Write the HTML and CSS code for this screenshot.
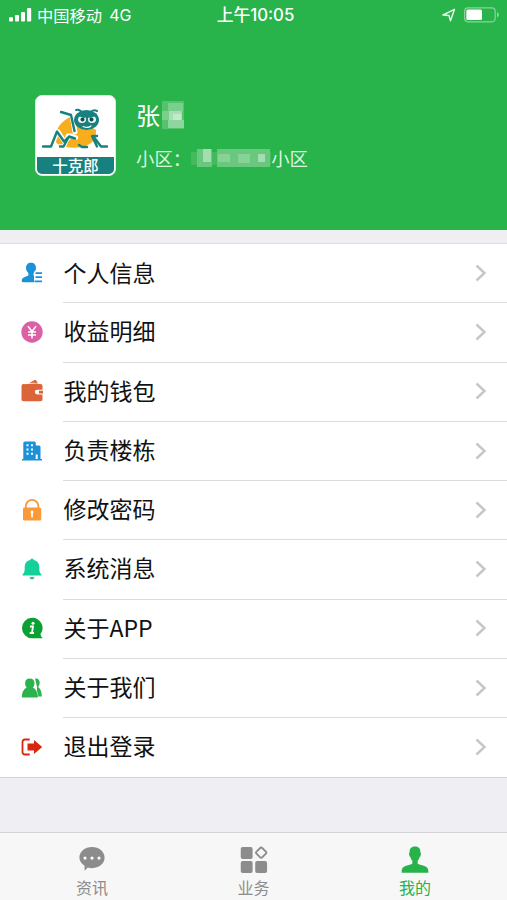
FILE: index.html
```html
<!DOCTYPE html>
<html lang="zh-CN">
<head>
<meta charset="utf-8">
<title>我的</title>
<link rel="stylesheet" href="styles.css">
</head>
<body>
<div class="app">
  <header class="header">
    <div class="status">
      <div class="carrier">
        <svg class="signal" width="24" height="14" viewBox="0 0 24 14" fill="#fff"><rect x="0" y="9.2" width="4" height="4.3" rx="1"/><rect x="6" y="7" width="4" height="6.5" rx="1"/><rect x="12" y="4" width="4" height="9.5" rx="1"/><rect x="18" y="0" width="4.2" height="13.5" rx="1"/></svg>
        <span>中国移动</span><span class="network">4G</span>
      </div>
      <div class="time">上午10:05</div>
      <div class="power">
        <svg width="14" height="14" viewBox="0 0 14 14" fill="none" stroke="#e4f7e8" stroke-width="1.5" stroke-linejoin="round"><path d="M1 7 12.5 1.3 8.5 12.7 7 7.6Z"/></svg>
        <svg width="36" height="16" viewBox="0 0 36 16"><rect x=".6" y=".8" width="30.6" height="14" rx="3.5" fill="none" stroke="#8bd59d" stroke-width="1.2"/><rect x="2.3" y="2.5" width="15.7" height="10.6" rx="1.5" fill="#fff"/><path d="M33 5v5.5q2-1 2-2.7T33 5Z" fill="#8bd59d"/></svg>
      </div>
    </div>
    <div class="profile">
      <div class="logo">
        <svg class="cricket" width="79" height="61" viewBox="0 0 79 61" fill="none" stroke-linecap="round" stroke-linejoin="round">
          <path d="M38 20C28 22 20 31 19 41q0 6 4 8c9 4 24 4 32-2 4-3 5-7 5-13Z" fill="#f7ad1c"/>
          <path d="M25 16l11 3 3 17" stroke="#fff" stroke-width="5"/>
          <path d="M25 16l10 3 3.500 16" stroke="#17817f" stroke-width="2.400"/>
          <path d="M15 50.500l7-15 7 11 5-7 6 2M24 50.500h4l4-11" stroke="#fff" stroke-width="4.500"/>
          <path d="M7 50.500h8l6-15 7 10 5-5 6 2M24 50.500h3.500l5-9M43 49l3 2h5M56 40l5 10.500M57 40l8 10.500h6M61 40h-3" stroke="#17817f" stroke-width="2.400"/>
          <path d="M46 17q-2-4-6-3M54 17q3-4 7-2" stroke="#17817f" stroke-width="2"/>
          <ellipse cx="50.500" cy="24" rx="12.500" ry="10" fill="#17817f"/>
          <ellipse cx="46" cy="23.500" rx="4" ry="3.500" fill="#e8f6ee"/><ellipse cx="56" cy="23.500" rx="4" ry="3.500" fill="#e8f6ee"/>
          <circle cx="46.500" cy="23.500" r="2" fill="#124f50"/><circle cx="55.500" cy="23.500" r="2" fill="#124f50"/>
          <path d="M42 18.500l6 2.500M54 21l6-2.500" stroke="#17817f" stroke-width="2"/>
          <path d="M47 30.500q5 2 8-.5" stroke="#fff" stroke-width="1.200"/>
        </svg>
        <div class="brand">十克郎</div>
      </div>
      <div class="details">
        <div class="name">张
          <svg class="name-mask" width="22" height="28" viewBox="0 0 22 28"><path fill="#56c26e" d="M0 0h22v28H0z"/><path fill="#7bcf8d" d="M6 2h15v8H6zM0 10h7v9H0z"/><path fill="#a6dfb2" d="M7 10h13v9H7z"/><path fill="#c2e9ca" d="M11 13h8v6h-8z"/><path fill="#8dd69d" d="M6 19h16v8H6z"/></svg>
        </div>
        <div class="community"><span>小区：</span><svg class="place-mask" width="80" height="20" viewBox="0 0 80 20"><path fill="#43ba5e" d="M0 4h80v13H0z"/><path fill="#69c87e" d="M6 1h15v18H6zM26 1h53v18H26z"/><path fill="#a4deb0" d="M12 1h8v13h-8zM67 6h7v8h-7z"/><path fill="#86d297" d="M27 6h12v8H27zM47 6h12v9H47z"/></svg><span>小区</span></div>
      </div>
    </div>
  </header>

  <main class="menu">
    <a class="row"><svg class="icon" viewBox="0 0 24 24" fill="#1b91d8"><path d="M11 1.700c3.200 0 5 2.100 5 5 0 2.500-1 4-2.400 5.400v2.500L16 16v5.300H3.300q-1.600 0-1.600-1.500c0-3 3.500-4 6.700-5.200v-2.500C7 10.700 6 9.200 6 6.700c0-2.900 1.800-5 5-5Z"/><path d="M14 10.500h9v12h-9z" fill="#fff"/><path d="M15.500 11.300H22V13h-6.500zM15.500 15.300H22V17h-6.500zM14.500 19.500H22v1.700h-7.500z"/></svg><span class="label">个人信息</span><svg class="chevron" viewBox="0 0 12 18"><path d="m1.500 1.500 8 7.500-8 7.500"/></svg></a>
    <a class="row"><svg class="icon" viewBox="0 0 24 24"><circle cx="12" cy="12" r="10.700" fill="#dc61a4"/><path d="m8 6.200 4 5.300 4-5.300M8 12h8M8 15h8M12 11.500v7" fill="none" stroke="#fff" stroke-width="1.500"/></svg><span class="label">收益明细</span><svg class="chevron" viewBox="0 0 12 18"><path d="m1.500 1.500 8 7.500-8 7.500"/></svg></a>
    <a class="row"><svg class="icon" viewBox="0 0 24 24" fill="#dc6439"><path d="M8.500 4.500 14.500 1q1-.5 1.700.5l1.800 3z"/><rect x="1.500" y="5" width="21" height="17.300" rx="2"/><path d="M23 10.800h-5.800a2.300 2.300 0 0 0 0 4.600H23Z" fill="#fff"/><path d="M23 11.800h-4.500q1.300 1.300 0 2.600H23Z"/><path d="M4 4.800 15 4" stroke="#fff" stroke-width=".5"/></svg><span class="label">我的钱包</span><svg class="chevron" viewBox="0 0 12 18"><path d="m1.500 1.500 8 7.500-8 7.500"/></svg></a>
    <a class="row"><svg class="icon" viewBox="0 0 24 24" fill="#1b91d8"><path d="M3.300 20V4q0-1.500 1.500-1.500h9.500q1.500 0 1.500 1.500v2.500H19q1.500 0 1.500 1.500v12H22v1.500H2V20z"/><path d="M6.500 5.200h2v2h-2zM11 5.200h2v2h-2zM6.500 9.500h2v2h-2zM11 9.500h2v2h-2zM6.500 13.700h2v2h-2zM11 13.700h2v2h-2zM15.700 15.500h2V20h-2z" fill="#fff"/></svg><span class="label">负责楼栋</span><svg class="chevron" viewBox="0 0 12 18"><path d="m1.500 1.500 8 7.500-8 7.500"/></svg></a>
    <a class="row"><svg class="icon" viewBox="0 0 24 24"><path d="M5.800 11V8.200a6.300 6.300 0 0 1 12.600 0V11" fill="none" stroke="#fb9938" stroke-width="1.800"/><rect x="3" y="9.500" width="18.200" height="13" rx="1.500" fill="#fb9938"/><path d="M12 13.700v5" stroke="#fff" stroke-width="1.700" stroke-linecap="round"/><circle cx="12" cy="14" r="1.500" fill="#fff"/></svg><span class="label">修改密码</span><svg class="chevron" viewBox="0 0 12 18"><path d="m1.500 1.500 8 7.500-8 7.500"/></svg></a>
    <a class="row"><svg class="icon" viewBox="0 0 24 24" fill="#14d09b"><path d="M12 1.500q1.500 0 1.800 1.600c3.800.8 5.500 3.600 5.500 7.400 0 4.200.4 5.500 2.200 7v1h-19v-1c1.800-1.500 2.200-2.800 2.200-7 0-3.800 1.700-6.600 5.500-7.400Q10.500 1.500 12 1.500ZM9.500 20h5q-.6 2.500-2.500 2.500T9.500 20Z"/></svg><span class="label">系统消息</span><svg class="chevron" viewBox="0 0 12 18"><path d="m1.500 1.500 8 7.500-8 7.500"/></svg></a>
    <a class="row"><svg class="icon" viewBox="0 0 24 24"><path d="M12 1.700a10.300 10.300 0 0 1 8.400 16.500q.5 2.700 2.600 4l-10.500.1A10.300 10.300 0 1 1 12 1.700Z" fill="#0ba033"/><circle cx="13" cy="7.300" r="1.500" fill="#fff"/><path d="M10 10.500h3l-1 6.500h2M9.700 17h2" fill="none" stroke="#fff" stroke-width="1.800"/></svg><span class="label">关于APP</span><svg class="chevron" viewBox="0 0 12 18"><path d="m1.500 1.500 8 7.500-8 7.500"/></svg></a>
    <a class="row"><svg class="icon" viewBox="0 0 24 24" fill="#2cb34d"><path d="M15 2.500c3.300-.5 4.700 1.700 4.700 4.200 0 2-.8 3.200-1.700 4.400 2.600 1.500 3.700 5 3.800 9.400H17V11Z"/><path d="M9.800 2.500c3.100 0 4.700 2 4.700 4.700 0 2-.7 3.300-1.600 4.300 3.300 1.500 4.900 5 5 9.900H1.800c0-5 1.700-8.400 4.900-9.900-.9-1-1.600-2.300-1.600-4.300 0-2.700 1.600-4.700 4.700-4.700Z" stroke="#fff" stroke-width=".9" paint-order="stroke"/></svg><span class="label">关于我们</span><svg class="chevron" viewBox="0 0 12 18"><path d="m1.500 1.500 8 7.500-8 7.500"/></svg></a>
    <a class="row"><svg class="icon" viewBox="0 0 24 24"><path d="M9.700 4.500H5q-2.500 0-2.500 2.500v10q0 2.500 2.500 2.500h4.700" fill="none" stroke="#da270f" stroke-width="1.800"/><path d="M7.500 8.500H14V5l8.200 7-8.200 7v-3.500H7.500z" fill="#da270f"/></svg><span class="label">退出登录</span><svg class="chevron" viewBox="0 0 12 18"><path d="m1.500 1.500 8 7.500-8 7.500"/></svg></a>
  </main>

  <nav class="tabs">
    <a class="tab"><svg viewBox="0 0 30 30" fill="#8c8c8c"><path d="M15 2.200c7.700 0 13.500 5 13.500 11.300S22.700 24.800 15 24.800q-2.300 0-4.500-.6L7 27.500v-5.200C3.500 20 1.500 17 1.500 13.500 1.500 7.200 7.300 2.200 15 2.200Z"/><g fill="#fff"><circle cx="7.500" cy="14" r="1.700"/><circle cx="15" cy="14" r="1.700"/><circle cx="22.500" cy="14" r="1.700"/></g></svg><span>资讯</span></a>
    <a class="tab"><svg viewBox="0 0 30 30" fill="#8c8c8c"><rect x=".8" y="2.200" width="12.700" height="12.700" rx="2"/><rect x=".8" y="17.200" width="12.700" height="12.700" rx="2"/><rect x="16.300" y="17.200" width="12.700" height="12.700" rx="2"/><rect x="18.400" y="3.900" width="8.600" height="8.600" rx="1.500" fill="none" stroke="#8c8c8c" stroke-width="2" transform="rotate(45 22.700 8.200)"/></svg><span>业务</span></a>
    <a class="tab active"><svg viewBox="0 0 30 30" fill="#27b24a"><path d="M15 1.700c4.300 0 6 2.500 5.700 6.300q1 .2.700 1.700l-.5 2q-.2 1-.9 1c-.4 2-1.200 3.400-2.200 4.400v2.700c2.300 2.100 11.500 1.800 11.500 7.700v2.200H.7v-2.200c0-5.900 9.200-5.600 11.500-7.700v-2.700c-1-1-1.800-2.400-2.200-4.400q-.7 0-.9-1l-.5-2Q8.300 8.200 9.300 8C9 4.200 10.700 1.700 15 1.700Z"/></svg><span>我的</span></a>
  </nav>
</div>
</body>
</html>
```

FILE: styles.css
```css
* { box-sizing: border-box; }

body {
  margin: 0;
  background: #eeeef3;
  color: #111;
  font-family: "Noto Sans CJK SC", sans-serif;
}

.app {
  display: flex;
  flex-direction: column;
  width: 507px;
  height: 900px;
  overflow: hidden;
}

svg { display: block; flex: none; }

.header {
  height: 230px;
  flex: none;
  background: #28b34b;
  color: #fff;
}

.status {
  display: grid;
  grid-template-columns: 1fr auto 1fr;
  align-items: center;
  height: 30px;
  padding: 0 7px 0 9px;
  font-size: 16.3px;
  line-height: 28px;
}

.carrier { display: flex; align-items: center; height: 28px; }
.signal { margin-right: 4px; }
.network { margin-left: 7px; font-family: Inter, "Liberation Sans", sans-serif; font-size: 16px; }
.time { padding-left: 2px; font-family: Inter, "Noto Sans CJK SC", sans-serif; font-size: 16.8px; font-weight: 500; }
.power { display: flex; justify-content: flex-end; align-items: center; gap: 8px; }

.profile {
  display: flex;
  gap: 20px;
  padding: 65px 0 0 35px;
}

.logo {
  width: 81px;
  height: 81px;
  border: 1px solid #d6f0dc;
  border-radius: 7px;
  background: #fff;
  overflow: hidden;
}

.brand {
  height: 17px;
  margin: 0 1px;
  border-radius: 0 0 5px 5px;
  background: #17817f;
  font-size: 15.5px;
  font-weight: 500;
  line-height: 16px;
  text-align: center;
}

.details { padding-top: 4px; }

.name {
  display: flex;
  align-items: center;
  gap: 2px;
  height: 32px;
  font-size: 24px;
  line-height: 32px;
}

.community {
  display: flex;
  align-items: center;
  height: 26px;
  margin-top: 14px;
  color: #dcf5e1;
  font-size: 18.4px;
  line-height: 26px;
}

.name-mask, .place-mask { filter: blur(.7px); }

.menu {
  flex: none;
  margin-top: 12.500px;
  border-top: 1px solid #dedee2;
  border-bottom: 1px solid #d4d4d8;
  background: #fff;
}

.row {
  display: flex;
  align-items: center;
  height: 59.300px;
  padding-left: 20px;
}

.row:first-child { height: 58.800px; }

.icon { width: 24px; height: 24px; }

.label {
  flex: 1;
  height: 100%;
  margin-left: 19.500px;
  font-size: 23px;
  line-height: 57px;
}

.row + .row {
  background: linear-gradient(#dcdcdf, #dcdcdf) 63px 0 / 444px 1px no-repeat;
}

.chevron {
  width: 12px;
  height: 18px;
  margin-right: 20px;
  fill: none;
  stroke: #c5c5ca;
  stroke-width: 2.400;
}

.tabs {
  display: grid;
  grid-template-columns: repeat(3, 161.500px);
  justify-content: center;
  height: 68px;
  margin-top: auto;
  border-top: 1px solid #d3d3d7;
  background: #f7f7f8;
}

.tab {
  display: flex;
  flex-direction: column;
  align-items: center;
  gap: 1.500px;
  padding-top: 12px;
  color: #8c8c8c;
  font-size: 16px;
  line-height: 24px;
}

.tab svg { width: 28px; height: 28px; }
.active { color: #27b24a; }
```
